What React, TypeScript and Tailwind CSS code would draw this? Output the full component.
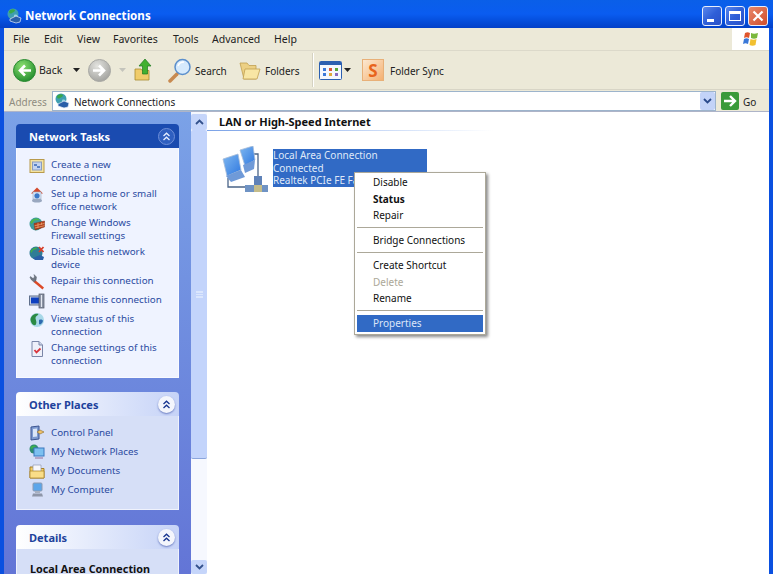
import type { ReactNode } from 'react';

const FONT = 'font-["Noto_Sans","DejaVu_Sans",sans-serif]';

// little globe + monitor used in the title bar and address field
function NetIcon({ size = 16 }: { size?: number }) {
  return (
    <svg width={size} height={size} viewBox="0 0 16 16" className="shrink-0">
      <circle cx="7" cy="6" r="5.5" fill="#3f9fb0" />
      <path d="M3 3c2-2 5-2 6-1 0 2-2 2-3 3S3 6 3 3z" fill="#3aa84a" />
      <path d="M8 7c2-1 3 0 4 1-1 2-3 2-4 1z" fill="#8fd0e0" />
      <path d="M4 11l6-3 5 2-1 4-4 1-6-2z" fill="#2a5fa8" stroke="#e8eef8" strokeWidth=".7" />
    </svg>
  );
}

function TaskIcon({ kind }: { kind: string }) {
  if (kind === 'new') {
    return (
      <svg width="16" height="16" viewBox="0 0 16 16">
        <rect x="1" y="1.500" width="14" height="13" fill="#f4e3a0" stroke="#b89a4c" />
        <rect x="3.500" y="4" width="9" height="8" fill="#c3d4f0" stroke="#8a9cc0" />
        <path d="M5 6h3v2H5zM8 8h3v2H8z" fill="#5a82c4" />
      </svg>
    );
  }
  if (kind === 'home') {
    return (
      <svg width="16" height="16" viewBox="0 0 16 16">
        <path d="M8 .5L2 6.500h12z" fill="#d4492c" />
        <ellipse cx="8" cy="13.500" rx="5" ry="2" fill="#9aa8c0" />
        <rect x="4" y="5" width="8" height="7" fill="#d9e4f4" stroke="#9aabc4" strokeWidth=".6" />
        <circle cx="8" cy="8.800" r="2.600" fill="#3a78c8" />
      </svg>
    );
  }
  if (kind === 'firewall') {
    return (
      <svg width="16" height="16" viewBox="0 0 16 16">
        <circle cx="7" cy="8" r="6.500" fill="#3d9c9c" />
        <path d="M1.500 6c3-4 7-4 9-2.500-2 1.500-5 0-6 2S2 9 1.500 6z" fill="#4eb84c" />
        <path d="M5 7.500l10.500-2.500v6L6 14z" fill="#b8401c" stroke="#7a2a10" strokeWidth=".5" />
        <path d="M5.500 9.800l10-2.400M5.800 12l9.700-2.300M9 6.700v2.300M12.500 6.500v2.200M9 9v3" stroke="#eebd86" strokeWidth=".6" />
      </svg>
    );
  }
  if (kind === 'disable') {
    return (
      <svg width="16" height="16" viewBox="0 0 16 16">
        <circle cx="7" cy="8" r="6.500" fill="#2f7d96" />
        <path d="M1.500 6c3-4 6-4 7-3-1 2-4 1-5 3S2 9 1.500 6z" fill="#3fae4c" />
        <path d="M4 13l7-3 4 2-1 3H6z" fill="#2a5fa8" />
        <path d="M10 2l4.500 5M14.500 2L10 7" stroke="#d8402c" strokeWidth="1.800" />
      </svg>
    );
  }
  if (kind === 'repair') {
    return (
      <svg width="16" height="16" viewBox="0 0 16 16">
        <path d="M6 6l9 7.500-1.500 2L4.500 8z" fill="#dc4a28" />
        <path d="M1 3.500L2.500 6 5 8 7 6.500 7.500 3 5 .5 5.500 3 4 4.500 1.500 2.500z" fill="#6e7682" stroke="#4a505a" strokeWidth=".4" />
      </svg>
    );
  }
  if (kind === 'rename') {
    return (
      <svg width="16" height="16" viewBox="0 0 16 16">
        <rect x="0.500" y="3" width="11" height="9" fill="#c4cee0" stroke="#5f6f8c" />
        <rect x="2" y="4.500" width="8" height="6" fill="#0c3fc0" />
        <rect x="10" y="1" width="5" height="14" fill="#8d95a6" stroke="#4e5566" strokeWidth=".7" />
        <path d="M12.500 2v12" stroke="#e4e8f0" />
      </svg>
    );
  }
  if (kind === 'status') {
    return (
      <svg width="16" height="16" viewBox="0 0 16 16">
        <circle cx="8" cy="8" r="7" fill="#a8d8e8" />
        <path d="M1.500 7c1-5 6-6 8-5-1 2-3 2-3 4s2 4 0 7c-3 1-5-3-5-6z" fill="#2a8a44" />
        <path d="M10 8c2-1 4 0 4 1-1 3-3 4-4 3z" fill="#2e6ab0" />
      </svg>
    );
  }
  return (
    <svg width="16" height="16" viewBox="0 0 16 16">
      <path d="M3 .5h7l3.500 3.500v11.500H3z" fill="#eef0fa" stroke="#7b86a8" />
      <path d="M10 .5V4h3.500" fill="#cfd6ea" stroke="#7b86a8" />
      <path d="M5.500 9l2 2.500L11.500 7.500" fill="none" stroke="#d8343c" strokeWidth="1.800" />
    </svg>
  );
}

function PlaceIcon({ kind }: { kind: string }) {
  if (kind === 'panel') {
    return (
      <svg width="16" height="16" viewBox="0 0 16 16">
        <path d="M2 2l8-1v13l-8 1z" fill="#7f9bd0" stroke="#3c5590" />
        <path d="M4 4l4-.5v8L4 12z" fill="#dbe6f7" />
        <path d="M8 7l3-2 4 2-4 2z" fill="#f1c36a" stroke="#8a6a28" strokeWidth=".6" />
      </svg>
    );
  }
  if (kind === 'places') {
    return (
      <svg width="16" height="16" viewBox="0 0 16 16">
        <circle cx="5" cy="5" r="4.500" fill="#2e8a70" />
        <path d="M1 4c2-3 5-3 6-2-1 2-3 1-4 3z" fill="#3cb24c" />
        <rect x="5" y="4" width="10" height="8" fill="#7cc0f0" stroke="#3a78c0" />
        <path d="M6 13h8v2H6z" fill="#b4a6c8" />
      </svg>
    );
  }
  if (kind === 'docs') {
    return (
      <svg width="16" height="16" viewBox="0 0 16 16">
        <path d="M1 4h4l1 1.500h9V15H1z" fill="#f5cf66" stroke="#a67f24" />
        <path d="M4 2h8v9H4z" fill="#f8f8fb" stroke="#9098b0" strokeWidth=".7" />
        <path d="M1 8h14v7H1z" fill="#f9dd88" stroke="#a67f24" strokeWidth=".7" />
      </svg>
    );
  }
  return (
    <svg width="16" height="16" viewBox="0 0 16 16">
      <rect x="4" y="1" width="9" height="8" rx="1" fill="#5ca6ea" stroke="#8d9ab0" />
      <rect x="6" y="9" width="5" height="2" fill="#a8b0c0" />
      <path d="M4 11.500h9l1 3H3z" fill="#8e96a8" />
    </svg>
  );
}

function Chevrons({ dark = false }: { dark?: boolean }) {
  return (
    <span className={`flex h-[17px] w-[17px] items-center justify-center rounded-full ${dark ? 'bg-[#f4f6fc] shadow-[0_1px_2px_#6a7cc0]' : 'border border-[#6f8fd8] bg-[#2f5fc0]'}`}>
      <svg width="9" height="9" viewBox="0 0 9 9" fill="none" stroke={dark ? '#17358f' : '#e6eeff'} strokeWidth="1.300">
        <path d="M1.500 4L4.500 1.200 7.500 4M1.500 8L4.500 5.200 7.500 8" />
      </svg>
    </span>
  );
}

function Panel({ title, primary, bodyClass, children }: { title: string; primary?: boolean; bodyClass: string; children: ReactNode }) {
  return (
    <section className="w-[163px] shrink-0">
      <div className={`flex h-6 items-center justify-between rounded-t-[4px] pl-[13px] pr-[4px] ${primary ? 'bg-[#1a4bb0]' : 'bg-gradient-to-r from-white to-[#c6d3f7]'}`}>
        <h2 className={`pt-[1px] text-[11px] leading-none font-bold ${primary ? 'text-white' : 'text-[#21429c]'}`}>{title}</h2>
        <Chevrons dark={!primary} />
      </div>
      <div className={`${primary ? 'bg-[#eff3ff]' : 'bg-[#d6dff7]'} ${bodyClass} border-x border-b border-white/60 pl-[12px] pr-1`}>
        {children}
      </div>
    </section>
  );
}

function TaskRow({ icon, children }: { icon: ReactNode; children: ReactNode }) {
  return (
    <div className="mb-[3px] flex min-h-4 gap-[6px] text-[9.800px] leading-[13px] text-[#2a4a9f]">
      <span className="h-4 w-4 shrink-0">{icon}</span>
      <span className="whitespace-pre-line">{children}</span>
    </div>
  );
}

function Separator() {
  return <span className="mx-1 h-[34px] w-px bg-[#d5d2c2] shadow-[1px_0_0_#fff]" />;
}

function Caret({ color = '#222' }: { color?: string }) {
  return (
    <svg width="7" height="4" viewBox="0 0 7 4">
      <path d="M0 0h7L3.500 4z" fill={color} />
    </svg>
  );
}

function RoundArrow({ grey = false }: { grey?: boolean }) {
  const id = grey ? 'arrowGrey' : 'arrowGreen';
  return (
    <svg width="23" height="23" viewBox="0 0 23 23" className="shrink-0">
      <defs>
        <radialGradient id={id} cx="40%" cy="30%" r="75%">
          <stop offset="0" stopColor={grey ? '#e4e4e0' : '#8ade6e'} />
          <stop offset="1" stopColor={grey ? '#a0a09c' : '#1f8a2c'} />
        </radialGradient>
      </defs>
      <circle cx="11.500" cy="11.500" r="11" fill={`url(#${id})`} stroke={grey ? '#a8a8a4' : '#2a8a30'} />
      {grey ? (
        <path d="M5 11.500h10M11 6.500l5 5-5 5" fill="none" stroke="#fff" strokeWidth="2.600" />
      ) : (
        <path d="M18 11.500H8M12 6.500l-5 5 5 5" fill="none" stroke="#fff" strokeWidth="2.600" />
      )}
    </svg>
  );
}

function NetworkBigIcon() {
  return (
    <svg width="48" height="48" viewBox="0 0 48 48" className="-mt-[3px] shrink-0">
      <defs>
        <linearGradient id="screen" x1="0" y1="0" x2="1" y2="1">
          <stop offset="0" stopColor="#7fb8f0" />
          <stop offset="1" stopColor="#2f78e0" />
        </linearGradient>
      </defs>
      <path d="M32 8h5v24" fill="none" stroke="#4a6488" strokeWidth="1.300" />
      <path d="M7 32v9h18" fill="none" stroke="#4a6488" strokeWidth="1.300" />
      <path d="M19 4L32 0l2 14-10 6z" fill="url(#screen)" stroke="#a8bcd8" strokeWidth=".8" />
      <path d="M22 19l12-5-1 9-9 4z" fill="#6f9ad8" />
      <path d="M2 13L17 8l3 16-14 6z" fill="url(#screen)" stroke="#a8bcd8" strokeWidth=".8" />
      <path d="M5 30l15-6 4 7-14 5z" fill="#6f9ad8" />
      <path d="M33 30h8v10h-8z" fill="#5f82b8" />
      <path d="M24 39h23v7H24z" fill="#6f93c4" />
      <path d="M33 39h8v7h-8z" fill="#c4bc8a" />
    </svg>
  );
}

function MenuItem({ children, bold, disabled, active }: { children: string; bold?: boolean; disabled?: boolean; active?: boolean }) {
  return (
    <div className={`flex h-[16.500px] items-center pl-[16px] text-[10px] leading-none ${bold ? 'font-bold' : ''} ${disabled ? 'text-[#aca899]' : active ? 'bg-[#316ac5] text-[#dce6f8]' : 'text-[#111]'}`}>
      {children}
    </div>
  );
}

function MenuLine() {
  return <div className="my-[3.250px] h-0.5 border-y border-t-[#aca899] border-b-white" />;
}

export default function App() {
  const menus = ['File', 'Edit', 'View', 'Favorites', 'Tools', 'Advanced', 'Help'];
  const menuWidths = ['w-[31px]', 'w-[33px]', 'w-[36px]', 'w-[60px]', 'w-[39px]', 'w-[62px]', 'w-[40px]'];
  const buttonClass = 'flex h-[20px] w-[20px] items-center justify-center rounded-[3px] border border-[#e8eefc] bg-gradient-to-br from-[#5a86ec] via-[#2f5fd8] to-[#2a50c8]';

  return (
    <div className={`${FONT} flex h-[574px] w-[773px] flex-col overflow-hidden bg-[#0a50e0] text-[10.500px] text-[#222]`}>
      {/* title bar */}
      <header className="flex h-[28px] shrink-0 items-center bg-gradient-to-b from-[#0a5fe8] via-[#0a5cf0] to-[#0340c8] pl-[6px] pr-[5px] pt-[3px]">
        <NetIcon />
        <h1 className="ml-[3px] flex-1 pt-[1px] text-[11.600px] font-bold text-white">Network Connections</h1>
        <div className="flex gap-[3px]">
          <button className={`${buttonClass} relative`}>
            <span className="absolute bottom-[3px] left-[4px] h-[3px] w-[7px] bg-white" />
          </button>
          <button className={buttonClass}>
            <span className="h-[10px] w-[12px] border border-t-[3px] border-white" />
          </button>
          <button className="flex h-[20px] w-[20px] items-center justify-center rounded-[3px] border border-[#e8eefc] bg-gradient-to-br from-[#e8876a] to-[#d04c28]">
            <svg width="12" height="12" viewBox="0 0 12 12" stroke="#fff" strokeWidth="2.200">
              <path d="M1.500 1.500l9 9M10.500 1.500l-9 9" />
            </svg>
          </button>
        </div>
      </header>

      <div className="flex min-h-0 flex-1 flex-col px-1">
        {/* menu bar */}
        <nav className="flex h-[23px] shrink-0 items-center border-b border-[#dcd9ca] bg-[#ece9d8] pl-[9px]">
          {menus.map((m, i) => (
            <span key={m} className={`${menuWidths[i]} pt-[1px]`}>{m}</span>
          ))}
          <span className="ml-auto flex h-[22px] w-[37px] items-center justify-center bg-white">
            <svg width="18" height="17" viewBox="0 0 18 17">
              <path d="M3 2c2-1 3-1 5 0L7 7C5 6 4 6 2 7z" fill="#e0552c" />
              <path d="M9 2c2 1 4 1 7 0l-1 5c-2 1-4 1-6 0z" fill="#7ab83c" />
              <path d="M2 8c2-1 3-1 5 0l-1 5c-2-1-3-1-5 0z" fill="#3a78d8" />
              <path d="M8.500 8c2 1 4 1 6 0l-1 6c-2 1-4 1-6 0z" fill="#f2c030" />
            </svg>
          </span>
        </nav>

        {/* toolbar */}
        <div className="flex h-[39px] shrink-0 items-center border-b border-[#d8d5c6] bg-[#ece9d8] pl-[9px] text-[10px]">
          <RoundArrow />
          <span className="ml-[3px] w-[34px] pt-[2px] text-[10.500px]">Back</span>
          <Caret />
          <span className="ml-[8px]"><RoundArrow grey /></span>
          <span className="ml-[8px]"><Caret color="#c4c4bc" /></span>
          <svg width="20" height="24" viewBox="0 0 20 24" className="ml-[8px]">
            <path d="M1 11h6l1 1.500h7V22H1z" fill="#f0cc6a" stroke="#a88a30" strokeWidth=".8" />
            <path d="M11 1l6 7h-3.500v8h-5V8H5z" fill="#42b030" stroke="#1e7a20" strokeWidth=".7" />
          </svg>
          <span className="ml-[4px]"><Separator /></span>
          <svg width="25" height="25" viewBox="0 0 25 25" className="ml-[1px]">
            <path d="M3 23l7-7" stroke="#c88a50" strokeWidth="3.500" strokeLinecap="round" />
            <circle cx="15.500" cy="9" r="7.500" fill="#d6eafc" stroke="#5b8fcc" strokeWidth="1.500" />
            <path d="M11 8c1-3 3-4 6-4" stroke="#fff" strokeWidth="1.500" fill="none" />
          </svg>
          <span className="ml-[3px] w-[44px] pt-[2px]">Search</span>
          <svg width="22" height="21" viewBox="0 0 22 21">
            <path d="M1 3h7l2 2.500h7V19H5z" fill="#ecd084" stroke="#c0a050" strokeWidth=".8" />
            <path d="M6 9h15l-3 10H4z" fill="#f8e6a4" stroke="#c0a050" strokeWidth=".8" />
          </svg>
          <span className="ml-[4px] w-[43px] pt-[2px]">Folders</span>
          <Separator />
          <svg width="23" height="19" viewBox="0 0 23 19" className="ml-[2px]">
            <rect x=".5" y=".5" width="22" height="18" rx="1" fill="#f4f7fd" stroke="#2b5fb0" />
            <rect x="1" y="1" width="21" height="3" fill="#2b5fb0" />
            <path d="M4 7h3v3H4z" fill="#3a78d8" /><path d="M10 7h3v3h-3z" fill="#d8553a" /><path d="M16 7h3v3h-3z" fill="#58a83a" />
            <path d="M4 12h3v3H4z" fill="#3a78d8" /><path d="M10 12h3v3h-3z" fill="#e0a83a" /><path d="M16 12h3v3h-3z" fill="#8a6ac0" />
          </svg>
          <span className="ml-[2px]"><Caret /></span>
          <span className="ml-[1px]"><Separator /></span>
          <span className="ml-[2px] flex h-[22px] w-[22px] items-center justify-center border border-[#e8b078] bg-gradient-to-br from-[#fbe8d0] to-[#f4b070] text-[17px] leading-none font-bold text-[#e8641c]">S</span>
          <span className="ml-[6px] pt-[2px]">Folder Sync</span>
        </div>

        {/* address bar */}
        <div className="flex h-[22px] shrink-0 items-center border-b border-[#aeb4c8] bg-[#ece9d8] pl-[5px] text-[10px]">
          <span className="w-[43px] pt-[3px] text-[#8f8c80]">Address</span>
          <div className="flex h-[20px] w-[664px] items-center border border-[#9db4cc] bg-white pl-[1px]">
            <NetIcon />
            <span className="ml-[4px] flex-1 pt-[3px] text-[#222]">Network Connections</span>
            <span className="flex h-[18px] w-[15px] items-center justify-center rounded-[2px] bg-[#c3d3f8]">
              <svg width="9" height="6" viewBox="0 0 9 6" fill="none" stroke="#2a4a8c" strokeWidth="1.800">
                <path d="M1 1l3.500 3.500L8 1" />
              </svg>
            </span>
          </div>
          <span className="ml-[5px] flex h-[18px] w-[18px] items-center justify-center rounded-[2px] bg-[#3a9a3a]">
            <svg width="14" height="12" viewBox="0 0 14 12" fill="none" stroke="#fff" strokeWidth="2.400">
              <path d="M1 6h10M7 1l5 5-5 5" />
            </svg>
          </span>
          <span className="ml-[4px] pt-[3px]">Go</span>
        </div>

        {/* body */}
        <div className="relative flex min-h-0 flex-1 bg-white">
          <aside className="flex h-full w-[187px] shrink-0 flex-col gap-[14px] overflow-hidden bg-gradient-to-b from-[#7ba2e7] to-[#6375d6] pl-[12px] pt-3">
            <Panel title="Network Tasks" primary bodyClass="pt-[10px] pb-[7px]">
              <TaskRow icon={<TaskIcon kind="new" />}>{'Create a new\nconnection'}</TaskRow>
              <TaskRow icon={<TaskIcon kind="home" />}>{'Set up a home or small\noffice network'}</TaskRow>
              <TaskRow icon={<TaskIcon kind="firewall" />}>{'Change Windows\nFirewall settings'}</TaskRow>
              <TaskRow icon={<TaskIcon kind="disable" />}>{'Disable this network\ndevice'}</TaskRow>
              <TaskRow icon={<TaskIcon kind="repair" />}>Repair this connection</TaskRow>
              <TaskRow icon={<TaskIcon kind="rename" />}>Rename this connection</TaskRow>
              <TaskRow icon={<TaskIcon kind="status" />}>{'View status of this\nconnection'}</TaskRow>
              <TaskRow icon={<TaskIcon kind="settings" />}>{'Change settings of this\nconnection'}</TaskRow>
            </Panel>
            <Panel title="Other Places" bodyClass="pt-[9px] pb-[11px]">
              <div className="flex flex-col gap-[3px]">
                {[
                  ['panel', 'Control Panel'],
                  ['places', 'My Network Places'],
                  ['docs', 'My Documents'],
                  ['computer', 'My Computer'],
                ].map(([k, t]) => (
                  <div key={k} className="flex h-4 items-center gap-[6px] text-[9.800px] text-[#2a4a9f]">
                    <PlaceIcon kind={k} />
                    <span>{t}</span>
                  </div>
                ))}
              </div>
            </Panel>
            <div className="mt-[1px]">
              <Panel title="Details" bodyClass="pt-[15px] pb-[10px]">
                <div className="ml-[1px] text-[10.800px] leading-none font-bold text-[#111]">Local Area Connection</div>
              </Panel>
            </div>
          </aside>

          {/* scrollbar */}
          <div className="flex h-full w-[16px] shrink-0 flex-col bg-[#f6f8fe] pt-[2px]">
            <div className="flex h-[16px] items-center justify-center rounded-[2px] bg-[#c5d5fa]">
              <svg width="9" height="6" viewBox="0 0 9 6" fill="none" stroke="#33518c" strokeWidth="1.800"><path d="M1 5l3.500-3.500L8 5" /></svg>
            </div>
            <div className="flex h-[329px] items-center justify-center rounded-[2px] border-b border-[#8ba5dc] bg-[#c3d4fb]">
              <span className="h-[7px] w-[7px] border-y border-[#dbe6fd] bg-[linear-gradient(#dbe6fd_1px,transparent_1px)] bg-[length:100%_2px]" />
            </div>
            <div className="mt-auto flex h-[14px] items-center justify-center rounded-[2px] bg-[#c5d5fa]">
              <svg width="9" height="6" viewBox="0 0 9 6" fill="none" stroke="#33518c" strokeWidth="1.800"><path d="M1 1l3.500 3.500L8 1" /></svg>
            </div>
          </div>

          {/* content */}
          <main className="min-w-0 flex-1 bg-white pl-[12px] pt-[3px]">
            <h3 className="text-[11px] leading-[14px] font-bold text-[#111]">LAN or High-Speed Internet</h3>
            <div className="-ml-[12px] mt-[1px] h-px w-[286px] bg-gradient-to-r from-[#7ba2e7] to-white" />
            <div className="ml-[2px] mt-[18px] flex">
              <NetworkBigIcon />
              <div className="ml-[4px] h-[38px] w-[154px] bg-[#316ac5] text-[10px] leading-[12.500px] text-[#dfe8f8]">
                <div>Local Area Connection</div>
                <div>Connected</div>
                <div>Realtek PCIe FE Family</div>
              </div>
            </div>
          </main>

          {/* context menu */}
          <div className="absolute left-[350px] top-[60px] h-[163px] w-[132px] border border-[#aca899] bg-white p-[2px] pt-[1px] shadow-[2px_2px_3px_#8a8a8a]">
            <MenuItem>Disable</MenuItem>
            <MenuItem bold>Status</MenuItem>
            <MenuItem>Repair</MenuItem>
            <MenuLine />
            <MenuItem>Bridge Connections</MenuItem>
            <MenuLine />
            <MenuItem>Create Shortcut</MenuItem>
            <MenuItem disabled>Delete</MenuItem>
            <MenuItem>Rename</MenuItem>
            <MenuLine />
            <MenuItem active>Properties</MenuItem>
          </div>
        </div>
      </div>
    </div>
  );
}
